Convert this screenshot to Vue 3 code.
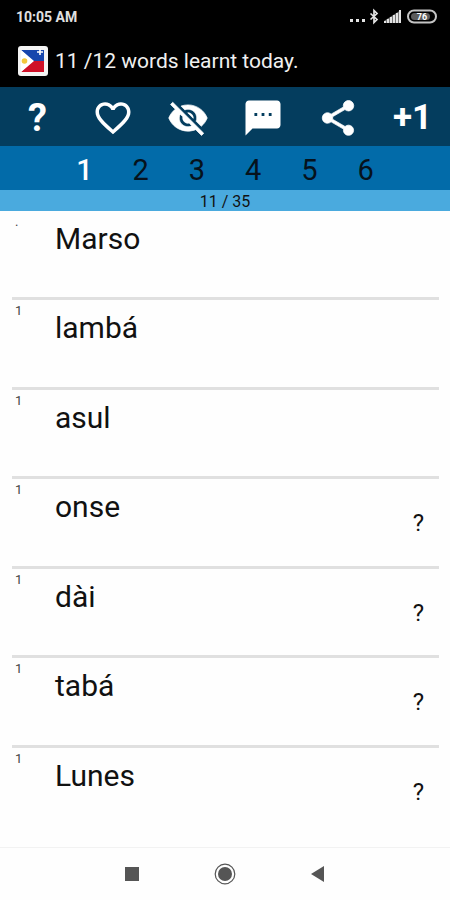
<template>
  <div class="app">
    <header class="top">
      <div class="status-bar">
        <span class="time">10:05 AM</span>
        <svg class="status-icons" width="88" height="18" viewBox="0 0 88 18">
          <g fill="#e4e4e4">
            <rect x="0" y="11" width="3" height="3" />
            <rect x="6" y="11" width="3" height="3" />
            <rect x="12" y="11" width="3" height="3" />
            <path d="M34 15V13L51 2V15Z" fill="#777" />
            <rect x="34" y="13" width="2" height="2" />
            <rect x="37" y="11" width="2" height="4" />
            <rect x="40" y="9" width="2" height="6" />
            <rect x="43" y="7" width="2" height="8" />
            <rect x="46" y="5" width="2" height="10" />
            <rect x="49" y="2" width="2" height="13" />
          </g>
          <path
            d="M20.5 5.5 L27 11.5 L24 14.5 V2.5 L27 5.5 L20.5 11.5"
            fill="none"
            stroke="#e4e4e4"
            stroke-width="1.7"
          />
          <rect
            x="58"
            y="2.5"
            width="28"
            height="12"
            rx="6"
            fill="none"
            stroke="#c4c4c4"
            stroke-width="2"
          />
          <rect x="61" y="5" width="19" height="7" rx="3.5" fill="#5c5c5c" />
          <text class="battery-text" x="72" y="12" text-anchor="middle">76</text>
        </svg>
      </div>

      <div class="title-bar">
        <!-- Philippine flag -->
        <svg width="30" height="30" viewBox="0 0 30 30">
          <rect width="30" height="30" rx="3" fill="#f4f4f4" />
          <path d="M3 4H26V15H15Z" fill="#1746ad" />
          <path d="M3 26H26V15H15Z" fill="#cf1028" />
          <path d="M3 4L16 15L3 26Z" fill="#fff" />
          <circle cx="6.5" cy="15" r="2.8" fill="#f3c73c" />
          <path d="M22 3V9M19 6H25" stroke="#fff" stroke-width="1.6" />
        </svg>
        <h1 class="title">11 /12 words learnt today.</h1>
      </div>
    </header>

    <div class="toolbar">
      <button
        v-for="action in actions"
        :key="action.label"
        type="button"
        class="tool-btn"
        :aria-label="action.label"
      >
        <svg v-if="action.path" width="42" height="42" viewBox="0 0 24 24">
          <path :d="action.path" :class="action.class" fill="#fff" />
        </svg>
        <span v-else :class="action.class">{{ action.text }}</span>
      </button>
    </div>

    <nav class="levels">
      <button
        v-for="level in 6"
        :key="level"
        type="button"
        class="level-btn"
        :class="{ 'level-btn--active': level === currentLevel }"
        @click="currentLevel = level"
      >
        {{ level }}
      </button>
    </nav>

    <div class="progress">11 / 35</div>

    <ul class="word-list">
      <li v-for="word in words" :key="word.text" class="word">
        <span class="word-count">{{ word.count }}</span>
        <span class="word-text">{{ word.text }}</span>
        <span v-if="word.hint" class="word-hint">?</span>
      </li>
    </ul>

    <footer class="system-nav">
      <button type="button" class="nav-btn" aria-label="Recent apps">
        <svg width="22" height="22" viewBox="0 0 22 22">
          <rect x="4" y="4" width="14" height="14" fill="#555" />
        </svg>
      </button>
      <button type="button" class="nav-btn" aria-label="Home">
        <svg width="22" height="22" viewBox="0 0 22 22">
          <circle cx="11" cy="11" r="9.8" fill="none" stroke="#555" stroke-width="1.2" />
          <circle cx="11" cy="11" r="7" fill="#555" />
        </svg>
      </button>
      <button type="button" class="nav-btn" aria-label="Back">
        <svg width="22" height="22" viewBox="0 0 22 22">
          <path d="M4 11L17 3V19Z" fill="#555" />
        </svg>
      </button>
    </footer>
  </div>
</template>

<script setup>
import { ref } from "vue";

const currentLevel = ref(1);

const actions = [
  { label: "Help", text: "?", class: "tool-help" },
  {
    label: "Favourite",
    path: "M16.5 3c-1.74 0-3.41.81-4.5 2.09C10.91 3.81 9.24 3 7.5 3 4.42 3 2 5.42 2 8.5c0 3.78 3.4 6.86 8.55 11.54L12 21.35l1.45-1.32C18.6 15.36 22 12.28 22 8.5 22 5.42 19.58 3 16.5 3zm-4.4 15.55l-.1.1-.1-.1C7.14 14.24 4 11.39 4 8.5 4 6.5 5.5 5 7.5 5c1.54 0 3.04.99 3.57 2.36h1.87C13.46 5.99 14.96 5 16.5 5c2 0 3.5 1.5 3.5 3.5 0 2.89-3.14 5.74-7.9 10.05z",
  },
  {
    label: "Hide",
    path: "M12 7c2.76 0 5 2.24 5 5 0 .65-.13 1.26-.36 1.83l2.92 2.92c1.51-1.26 2.7-2.89 3.43-4.75-1.73-4.39-6-7.5-11-7.5-1.4 0-2.74.25-3.98.7l2.16 2.16C10.74 7.13 11.35 7 12 7zM2 4.27l2.28 2.28.46.46C3.08 8.3 1.78 10.02 1 12c1.73 4.39 6 7.5 11 7.5 1.55 0 3.03-.3 4.38-.84l.42.42L19.73 22 21 20.73 3.27 3 2 4.27zM7.53 9.8l1.55 1.55c-.05.21-.08.43-.08.65 0 1.66 1.34 3 3 3 .22 0 .44-.03.65-.08l1.55 1.55c-.67.33-1.41.53-2.2.53-2.76 0-5-2.24-5-5 0-.79.2-1.53.53-2.2zm4.31-.78l3.15 3.15.02-.16c0-1.66-1.34-3-3-3l-.17.01z",
    class: "tool-icon--bold",
  },
  {
    label: "Comment",
    path: "M20 2H4c-1.1 0-2 .9-2 2v18l4-4h14c1.1 0 2-.9 2-2V4c0-1.1-.9-2-2-2zM8.7 9.2v1.6H7.1V9.2zm4.1 0v1.6h-1.6V9.2zm4.1 0v1.6h-1.6V9.2z",
  },
  {
    label: "Share",
    path: "M18 16.08c-.76 0-1.44.3-1.96.77L8.91 12.7c.05-.23.09-.46.09-.7s-.04-.47-.09-.7l7.05-4.11c.54.5 1.25.81 2.04.81 1.66 0 3-1.34 3-3s-1.34-3-3-3-3 1.34-3 3c0 .24.04.47.09.7L8.04 9.81C7.5 9.31 6.79 9 6 9c-1.66 0-3 1.34-3 3s1.34 3 3 3c.79 0 1.5-.31 2.04-.81l7.12 4.16c-.05.21-.08.43-.08.65 0 1.61 1.31 2.92 2.92 2.92s2.92-1.31 2.92-2.92-1.31-2.92-2.92-2.92z",
    class: "tool-icon--bold",
  },
  { label: "Add one", text: "+1", class: "tool-plus" },
];

const words = [
  { text: "Marso", count: ".", hint: false },
  { text: "lambá", count: "1", hint: false },
  { text: "asul", count: "1", hint: false },
  { text: "onse", count: "1", hint: true },
  { text: "dài", count: "1", hint: true },
  { text: "tabá", count: "1", hint: true },
  { text: "Lunes", count: "1", hint: true },
];
</script>

<style>
body {
  margin: 0;
  background: #fefefe;
}
</style>

<style scoped>
.app {
  display: flex;
  flex-direction: column;
  min-height: 100vh;
  font-family: Roboto, "Liberation Sans", sans-serif;
  color: #111;
}

button {
  display: flex;
  align-items: center;
  justify-content: center;
  padding: 0;
  border: none;
  background: none;
  font-family: inherit;
  cursor: pointer;
}

svg {
  display: block;
}

.top {
  background: #000;
  color: #f0f0f0;
}

.status-bar {
  display: flex;
  align-items: center;
  justify-content: space-between;
  height: 34px;
  padding: 0 12px 0 16px;
}

.time {
  font-size: 14px;
  font-weight: 700;
  color: #e0e0e0;
}

.battery-text {
  font-size: 9px;
  font-weight: 700;
  fill: #fff;
}

.title-bar {
  display: flex;
  align-items: center;
  gap: 7px;
  height: 53px;
  padding: 0 18px;
}

.title {
  margin: 0;
  font-size: 21px;
  font-weight: 400;
}

.toolbar {
  display: flex;
  height: 59px;
  background: #043d5e;
}

.tool-btn {
  flex: 1;
  padding-top: 2px;
  color: #fff;
  font-weight: 700;
}

.tool-icon--bold {
  stroke: #fff;
  stroke-width: 0.4;
}

.tool-help {
  font-size: 38px;
}

.tool-plus {
  font-size: 35px;
}

.levels {
  display: flex;
  height: 44px;
  padding: 4px 12.5% 0;
  box-sizing: border-box;
  background: #026ba9;
}

.level-btn {
  flex: 1;
  font-size: 29px;
  color: #06121c;
}

.level-btn--active {
  color: #fff;
  font-weight: 500;
}

.progress {
  padding-top: 2px;
  background: #4aaade;
  font-size: 16px;
  line-height: 19px;
  text-align: center;
}

.word-list {
  flex: 1;
  display: grid;
  grid-auto-rows: 1fr;
  margin: 0;
  padding: 0 11px 10px 12px;
  list-style: none;
}

.word {
  display: flex;
  align-items: flex-start;
  min-height: 80px;
  box-sizing: border-box;
  border-bottom: 3px solid #e0e0e0;
}

.word:last-child {
  border-bottom-color: transparent;
}

.word-count {
  width: 43px;
  padding: 3px 0 0 3px;
  box-sizing: border-box;
  font-size: 13px;
  line-height: 16px;
  color: #444;
}

.word-text {
  flex: 1;
  padding-top: 9px;
  font-size: 30px;
  line-height: 38px;
}

.word-hint {
  padding: 30px 15px 0 0;
  font-size: 24px;
  line-height: 28px;
}

.system-nav {
  display: flex;
  height: 52px;
  padding: 0 19%;
  border-top: 1px solid #f2f2f2;
}

.nav-btn {
  flex: 1;
}
</style>
